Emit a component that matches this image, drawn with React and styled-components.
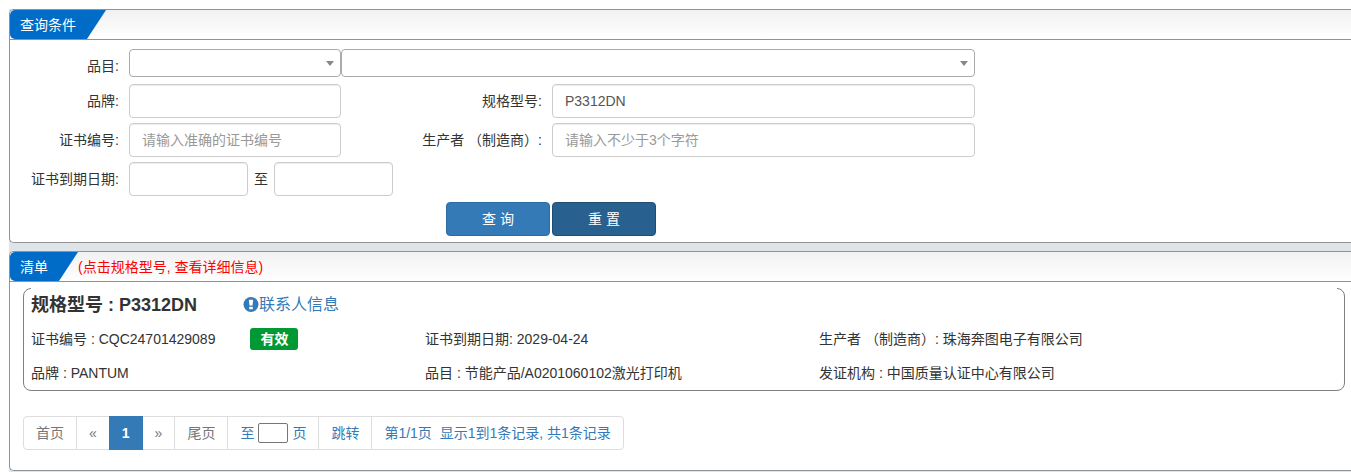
import React from "react";
import styled, { createGlobalStyle, css } from "styled-components";

const GlobalStyle = createGlobalStyle`
  *, *::before, *::after { box-sizing: border-box; }
  body {
    margin: 0;
    background: #fff;
    color: #333;
    font: 14px/20px "Liberation Sans", Arial, "Noto Sans CJK SC", sans-serif;
  }
  input, select, button { font: inherit; color: inherit; margin: 0; }
`;

const Page = styled.main`
  display: flex;
  flex-direction: column;
  gap: 8px;
  margin: 9px 0 0 9px;
  padding-bottom: 1px;
  background: #dfe4e8;
`;

const Panel = styled.section`
  background: #fff;
  border: 1px solid #909294;
  border-right: 0;
  border-radius: 5px 0 0 5px;
  overflow: hidden;
`;

const PanelHeader = styled.header`
  display: flex;
  height: 30px;
  line-height: 31px;
  border-bottom: 1px solid #909294;
  background: linear-gradient(#f1f1f1, #fff);
`;

const Tab = styled.h2`
  margin: 0;
  padding: 0 30px 0 10px;
  font-size: 14px;
  font-weight: 400;
  color: #fff;
  background: #006cc8;
  border-radius: 5px 0 0 5px;
  clip-path: polygon(0 0, 100% 0, calc(100% - 19px) 100%, 0 100%);
`;

const Hint = styled.span`
  color: #f00;
`;

const Form = styled.form`
  display: grid;
  grid-template-columns: 119px 212fr 211fr 423fr 376fr;
  grid-template-rows: 30px repeat(3, 34px) 34px;
  row-gap: 5px;
  padding: 9px 0 7px;
`;

const Label = styled.label`
  grid-column: ${(p) => p.$column || 1};
  padding-right: 10px;
  line-height: 34px;
  text-align: right;
  white-space: nowrap;
`;

const SelectBox = styled.div`
  position: relative;
  grid-column: ${(p) => p.$columns};
  height: 28px;
  &::after {
    content: "";
    position: absolute;
    right: 7px;
    top: 12px;
    border: 4px solid transparent;
    border-top: 5px solid #888;
    border-bottom: 0;
    pointer-events: none;
  }
`;

const Select = styled.select`
  display: block;
  width: 100%;
  height: 28px;
  padding: 0 20px 0 8px;
  appearance: none;
  background: #fff;
  border: 1px solid #aaa;
  border-radius: 4px;
`;

const Input = styled.input`
  grid-column: ${(p) => p.$column || "auto"};
  min-width: 0;
  width: ${(p) => p.$width || "100%"};
  height: 34px;
  padding: 6px 12px;
  color: #555;
  background: #fff;
  border: 1px solid #ccc;
  border-radius: 4px;
  box-shadow: inset 0 1px 1px rgba(0, 0, 0, 0.075);
  &::placeholder { color: #999; opacity: 1; }
`;

const DateRange = styled.div`
  grid-column: 2 / -1;
  display: flex;
  align-items: center;
  gap: 6px;
`;

const Actions = styled.div`
  grid-column: 1 / -1;
  display: flex;
  gap: 2px;
  padding: 1px 0 0 436px;
`;

const Button = styled.button`
  width: 104px;
  height: 34px;
  color: #fff;
  border: 1px solid #2e6da4;
  border-radius: 4px;
  background: #337ab7;
  ${(p) => p.$dark && css`
    background: #286090;
    border-color: #204d74;
  `}
`;

const Record = styled.article`
  margin: 6px 6px 25px 13px;
  padding: 0 7px;
  border: 1px solid gray;
  border-radius: 8px;
`;

const RecordTitle = styled.div`
  display: flex;
  align-items: center;
  gap: 46px;
  height: 34px;
  margin-top: -1px;
  background: #fff;
`;

const Model = styled.h3`
  margin: 0;
  font-size: 18px;
  line-height: 34px;
`;

const ContactLink = styled.a`
  display: flex;
  align-items: center;
  font-size: 16px;
  color: #337ab7;
  text-decoration: none;
`;

const Details = styled.div`
  display: grid;
  grid-template-columns: 394fr 394fr 518fr;
  line-height: 34px;
`;

const Detail = styled.div`
  display: flex;
  align-items: center;
  height: 34px;
  white-space: pre;
`;

const Status = styled.span`
  margin-left: 35px;
  padding: 0 10px;
  line-height: 22px;
  font-weight: bold;
  color: #fff;
  background: #093;
  border-radius: 3px;
`;

const Pagination = styled.nav`
  display: flex;
  margin: 0 0 20px 13px;
`;

const pageItem = css`
  display: flex;
  align-items: center;
  gap: 4px;
  height: 34px;
  padding: 0 12px;
  color: ${(p) => (p.$muted ? "#777" : "#337ab7")};
  white-space: pre;
  text-decoration: none;
  background: #fff;
  border: 1px solid #ddd;
  &:not(:first-child) { margin-left: -1px; }
  &:first-child { border-radius: 4px 0 0 4px; }
  &:last-child { border-radius: 0 4px 4px 0; }
  ${(p) => p.$active && css`
    position: relative;
    z-index: 1;
    font-weight: bold;
    color: #fff;
    background: #337ab7;
    border-color: #337ab7;
  `}
`;

const PageLink = styled.a`${pageItem}`;
const PageText = styled.label`${pageItem}`;

const PageInput = styled.input`
  width: 30px;
  height: 20px;
  padding: 0 2px;
  background: #fff;
  border: 1px solid #767676;
  border-radius: 2px;
`;

const AlertIcon = () => (
  <svg width="16" height="16" viewBox="0 0 16 16" aria-hidden="true">
    <circle cx="8" cy="7.5" r="7.5" fill="#337ab7" />
    <path
      d="M6.3 2.8h3.4q.4 0 .4.5L9.6 8q0 .5-.5.5H6.9q-.5 0-.5-.5L5.9 3.3q0-.5.4-.5z M6.6 9.8h2.8q.4 0 .4.4v1.7q0 .4-.4.4H6.6q-.4 0-.4-.4v-1.7q0-.4.4-.4z"
      fill="#fff"
    />
  </svg>
);

export default function App() {
  return (
    <>
      <GlobalStyle />
      <Page>
        <Panel>
          <PanelHeader>
            <Tab>查询条件</Tab>
          </PanelHeader>
          <Form onSubmit={(e) => e.preventDefault()}>
            <Label htmlFor="category">品目:</Label>
            <SelectBox $columns="2">
              <Select id="category"><option></option></Select>
            </SelectBox>
            <SelectBox $columns="3 / 5">
              <Select aria-label="品目"><option></option></Select>
            </SelectBox>

            <Label htmlFor="brand">品牌:</Label>
            <Input id="brand" $column="2" />
            <Label htmlFor="model" $column={3}>规格型号:</Label>
            <Input id="model" $column="4" defaultValue="P3312DN" />

            <Label htmlFor="cert">证书编号:</Label>
            <Input id="cert" $column="2" placeholder="请输入准确的证书编号" />
            <Label htmlFor="maker" $column={3}>生产者 （制造商）:</Label>
            <Input id="maker" $column="4" placeholder="请输入不少于3个字符" />

            <Label htmlFor="from">证书到期日期:</Label>
            <DateRange>
              <Input id="from" $width="119px" />
              <label htmlFor="to">至</label>
              <Input id="to" $width="119px" />
            </DateRange>

            <Actions>
              <Button type="submit">查 询</Button>
              <Button type="reset" $dark>重 置</Button>
            </Actions>
          </Form>
        </Panel>

        <Panel>
          <PanelHeader>
            <Tab>清单</Tab>
            <Hint>(点击规格型号, 查看详细信息)</Hint>
          </PanelHeader>
          <Record>
            <RecordTitle>
              <Model>规格型号 : P3312DN</Model>
              <ContactLink href="#contact"><AlertIcon />联系人信息</ContactLink>
            </RecordTitle>
            <Details>
              <Detail>证书编号 : CQC24701429089<Status>有效</Status></Detail>
              <Detail>证书到期日期: 2029-04-24</Detail>
              <Detail>生产者 （制造商）: 珠海奔图电子有限公司</Detail>
              <Detail>品牌 : PANTUM</Detail>
              <Detail>品目 : 节能产品/A0201060102激光打印机</Detail>
              <Detail>发证机构 : 中国质量认证中心有限公司</Detail>
            </Details>
          </Record>
          <Pagination aria-label="分页">
            <PageLink href="#first" $muted>首页</PageLink>
            <PageLink href="#prev" $muted>«</PageLink>
            <PageLink href="#1" $active aria-current="page">1</PageLink>
            <PageLink href="#next" $muted>»</PageLink>
            <PageLink href="#last" $muted>尾页</PageLink>
            <PageText>至<PageInput />页</PageText>
            <PageLink href="#go">跳转</PageLink>
            <PageLink href="#summary">{"第1/1页  显示1到1条记录, 共1条记录"}</PageLink>
          </Pagination>
        </Panel>
      </Page>
    </>
  );
}
